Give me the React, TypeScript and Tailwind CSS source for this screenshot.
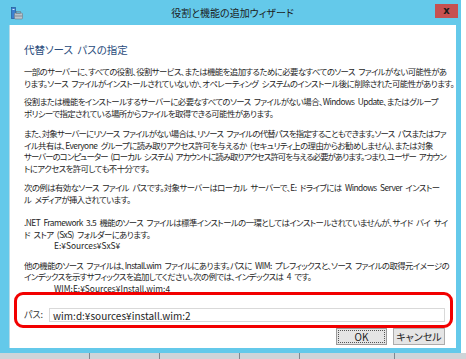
type Line = string | [string, string];

const paragraphs: { lines: Line[]; indent?: string; gap: string }[] = [
  {
    gap: "mt-0",
    lines: [
      "一部のサーバーに、すべての役割、役割サービス、または機能を追加するために必要なすべてのソース ファイルがない可能性があ",
      "ります。ソース ファイルがインストールされていないか、オペレーティング システムのインストール後に削除された可能性があります。",
    ],
  },
  {
    gap: "mt-[7px]",
    lines: [
      "役割または機能をインストールするサーバーに必要なすべてのソース ファイルがない場合、Windows Update、またはグループ",
      "ポリシーで指定されている場所からファイルを取得できる可能性があります。",
    ],
  },
  {
    gap: "mt-[9px]",
    lines: [
      ["また、対象サーバーにリソース ファイルがない場合は、リソース ファイルの代替パスを指定することもできます。ソース パスまたはファ", "tracking-[-0.75px]"],
      "イル共有は、Everyone グループに読み取りアクセス許可を与えるか (セキュリティ上の理由からお勧めしません)、または対象",
      ["サーバーのコンピューター (ローカル システム) アカウントに読み取りアクセス許可を与える必要があります。つまり、ユーザー アカウン", "tracking-[-0.9px]"],
      "トにアクセスを許可しても不十分です。",
    ],
  },
  {
    gap: "mt-[8px]",
    lines: [
      "次の例は有効なソース ファイル パスです。対象サーバーはローカル サーバーで、E: ドライブには Windows Server インストー",
      "ル メディアが挿入されています。",
    ],
  },
  {
    gap: "mt-[12px]",
    lines: [
      ".NET Framework 3.5 機能のソース ファイルは標準インストールの一環としてはインストールされていませんが、サイド バイ サイ",
      "ド ストア (SxS) フォルダーにあります。",
    ],
    indent: "E:¥Sources¥SxS¥",
  },
  {
    gap: "mt-[8px]",
    lines: [
      "他の機能のソース ファイルは、Install.wim ファイルにあります。パスに WIM: プレフィックスと、ソース ファイルの取得元イメージの",
      "インデックスを示すサフィックスを追加してください。次の例では、インデックスは 4 です。",
    ],
    indent: "WIM:E:¥Sources¥Install.wim:4",
  },
];

const font = "font-['Noto_Sans_CJK_JP',sans-serif] [font-feature-settings:'palt']";

const WizardIcon = () => (
  <svg width="12" height="13" viewBox="0 0 12 13">
    <rect x="0.5" y="0.5" width="4" height="11" fill="#3b7fd0" stroke="#1f4f8f" strokeWidth="0.6" />
    <rect x="1.5" y="2" width="2" height="1" fill="#cfe3f7" />
    <rect x="3.5" y="6" width="8" height="6" rx="1" fill="#b9c3cc" stroke="#6d7a86" strokeWidth="0.6" />
    <rect x="5.5" y="4.5" width="4" height="2" fill="none" stroke="#6d7a86" strokeWidth="0.6" />
    <rect x="3.5" y="8.5" width="8" height="1" fill="#7f8b96" />
  </svg>
);

export default function App() {
  return (
    <div className={`relative h-[359px] w-[466px] overflow-hidden bg-white ${font}`}>
      <div className="flex h-[353px] w-[461px] flex-col bg-[#64c9ea]">
        {/* title bar */}
        <div className="grid h-[25px] grid-cols-[1fr_auto_1fr] items-center">
          <div className="pl-[11px] pt-[2px]">
            <WizardIcon />
          </div>
          <div className="pl-[4px] text-[10px] text-[#1b1b1b]">役割と機能の追加ウィザード</div>
          <div className="flex justify-end self-start pr-[3px] pt-[4px]">
            <div className="flex h-[14px] w-[23px] items-center justify-center bg-[#c75050] font-['DejaVu_Sans',sans-serif] text-[10px] leading-none font-bold text-[#1a1a1a]">
              x
            </div>
          </div>
        </div>

        {/* content */}
        <div className="ml-[9px] mr-[5px] flex h-[323px] flex-col border-l border-[#b7dbe8] bg-white pl-[14px] pr-[8px]">
          <div className="pt-[17px] text-[10.5px] leading-[16px] text-[#2a4c7c] [word-spacing:2px]">代替ソース パスの指定</div>
          <div className="mt-[8px] flex flex-col text-[8.4px] leading-[11.5px] tracking-[-0.55px] text-[#262626] [word-spacing:2px]">
            {paragraphs.map((p, i) => (
              <div key={i} className={`flex flex-col ${p.gap}`}>
                {p.lines.map((l, j) =>
                  typeof l === "string" ? (
                    <div key={j} className="whitespace-nowrap">
                      {l}
                    </div>
                  ) : (
                    <div key={j} className={`whitespace-nowrap ${l[1]}`}>
                      {l[0]}
                    </div>
                  ),
                )}
                {p.indent && <div className="whitespace-nowrap pl-[30px] tracking-normal">{p.indent}</div>}
              </div>
            ))}
          </div>

          <div className="mt-[14px] flex items-center gap-[6px]">
            <span className="text-[9px] text-[#333]">パス:</span>
            <div className="flex h-[14px] w-[396px] items-center border border-[#d9d9d9] pl-[3px] text-[10px] text-[#1e1e1e]">
              wim:d:¥sources¥install.wim:2
            </div>
          </div>

          <div className="mt-[6px] flex justify-end gap-[6px] pr-[3px]">
            <button className="h-[17px] w-[51px] border border-[#9a9a9a] bg-[#e5e5e5] text-[10px] leading-none text-[#222] outline outline-1 -outline-offset-[3px] outline-dotted outline-[#555]">
              OK
            </button>
            <button className="h-[17px] w-[52px] border border-[#acacac] bg-[#e5e5e5] text-[10px] leading-none text-[#222]">
              キャンセル
            </button>
          </div>
        </div>
      </div>

      {/* bottom strip behind the window */}
      <div className="flex h-[6px] w-full bg-[#cfd4d8]">
        <div className="w-[90px] border-r border-[#7f8790]" />
        <div className="w-[70px] border-r border-[#7f8790]" />
        <div className="w-[80px] border-r border-[#7f8790]" />
        <div className="w-[60px] border-r border-[#7f8790]" />
        <div className="w-[95px] border-r border-[#7f8790]" />
      </div>

      {/* red annotation */}
      <div className="pointer-events-none absolute left-[14px] top-[292px] h-[36px] w-[439px] rounded-[9px] border-[3.5px] border-[#f20000]" />
    </div>
  );
}
